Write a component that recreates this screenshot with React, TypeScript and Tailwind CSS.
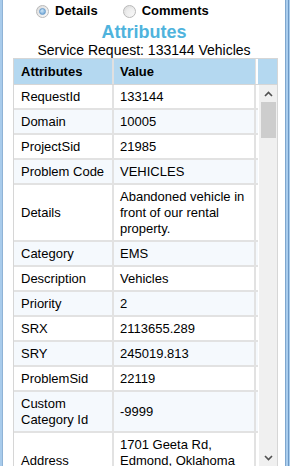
import React from "react";

const rows: { k: string; v: string }[] = [
  { k: "RequestId", v: "133144" },
  { k: "Domain", v: "10005" },
  { k: "ProjectSid", v: "21985" },
  { k: "Problem Code", v: "VEHICLES" },
  { k: "Details", v: "Abandoned vehicle in front of our rental property." },
  { k: "Category", v: "EMS" },
  { k: "Description", v: "Vehicles" },
  { k: "Priority", v: "2" },
  { k: "SRX", v: "2113655.289" },
  { k: "SRY", v: "245019.813" },
  { k: "ProblemSid", v: "22119" },
  { k: "Custom Category Id", v: "-9999" },
  { k: "Address", v: "1701 Geeta Rd, Edmond, Oklahoma 73034" },
];

function Radio({ checked }: { checked: boolean }) {
  return (
    <span className="w-[13px] h-[13px] rounded-full border border-[#b9b9b9] bg-gradient-to-br from-[#dcdcdc] to-[#fbfbfb] flex items-center justify-center">
      {checked ? (
        <span className="w-[7px] h-[7px] rounded-full bg-[radial-gradient(circle_at_40%_35%,#cfe6f7,#5e9bd0)] border border-[#6a9ccb]" />
      ) : (
        <span className="w-[7px] h-[7px] rounded-full bg-gradient-to-br from-[#e8e8e8] to-[#f7f7f7]" />
      )}
    </span>
  );
}

export default function App() {
  return (
    <div
      className="w-[290px] h-[466px] bg-white flex overflow-hidden text-black"
      style={{ fontFamily: '"Liberation Sans", Arial, sans-serif' }}
    >
      <div className="w-[3px] h-full flex">
        <div className="w-[2px] bg-[#a8cbeb]" />
        <div className="w-[1px] bg-[#8fb3d6]" />
      </div>
      <div className="w-[282px] h-full flex flex-col">
        <div className="h-[22px] flex items-center text-[13px] font-bold">
          <div className="ml-[33px] flex items-center gap-[6px]">
            <Radio checked={true} />
            <span>Details</span>
          </div>
          <div className="ml-[25px] flex items-center gap-[6px]">
            <Radio checked={false} />
            <span>Comments</span>
          </div>
        </div>
        <div className="h-[19px] flex items-center justify-center text-[18px] font-bold text-[#4fb3dd] leading-none">
          Attributes
        </div>
        <div className="h-[17px] flex items-center justify-center text-[14px] leading-none">
          Service Request: 133144 Vehicles
        </div>
        <div className="ml-[10px] w-[265px] flex-1 flex flex-col border-t border-l border-r border-[#d6d6d6] overflow-hidden text-[13px] leading-[16px]">
          <div className="flex h-[26px] border-b border-[#d6d6d6]">
            <div className="w-[100px] bg-[#b4d8f0] pl-[7px] flex items-center font-bold border-r-2 border-[#e0e0e0]">
              Attributes
            </div>
            <div className="w-[142px] bg-[#b4d8f0] pl-[6px] flex items-center font-bold border-r border-[#e0e0e0]">
              Value
            </div>
            <div className="w-[2px] bg-white" />
            <div className="flex-1 bg-[#b4d8f0]" />
          </div>
          <div className="flex flex-1 min-h-0">
            <div className="w-[244px] flex flex-col overflow-hidden">
              {rows.map((r, i) => (
                <div
                  key={r.k}
                  className={`flex shrink-0 border-b-2 border-[#e2e2e2] ${
                    i % 2 === 1 ? "bg-[#f5f9fd]" : "bg-white"
                  }`}
                >
                  <div className="w-[100px] pl-[7px] pr-[4px] py-[3.5px] flex items-center border-r-2 border-[#e2e2e2]">
                    {r.k}
                  </div>
                  <div className="w-[142px] pl-[6px] pr-[4px] py-[3.5px] flex items-center border-r-2 border-[#e2e2e2]">
                    {r.v}
                  </div>
                </div>
              ))}
            </div>
            <div className="flex-1 ml-[1px] bg-[#f0f0f0] flex flex-col items-center">
              <div className="h-[17px] w-full flex items-center justify-center">
                <svg width="9" height="6" viewBox="0 0 9 6">
                  <path d="M1 5 L4.5 1.5 L8 5" fill="none" stroke="#505050" strokeWidth="1.6" />
                </svg>
              </div>
              <div className="w-[15px] h-[36px] bg-[#cdcdcd]" />
              <div className="flex-1" />
              <div className="h-[17px] w-full flex items-center justify-center">
                <svg width="9" height="6" viewBox="0 0 9 6">
                  <path d="M1 1 L4.5 4.5 L8 1" fill="none" stroke="#505050" strokeWidth="1.6" />
                </svg>
              </div>
            </div>
          </div>
        </div>
      </div>
      <div className="w-[5px] h-full flex">
        <div className="w-[1px] bg-[#7fa7cf]" />
        <div className="w-[2px] bg-[#a9cdee]" />
        <div className="w-[1px] bg-[#6d98c4]" />
        <div className="w-[1px] bg-[#a9cdee]" />
      </div>
    </div>
  );
}
